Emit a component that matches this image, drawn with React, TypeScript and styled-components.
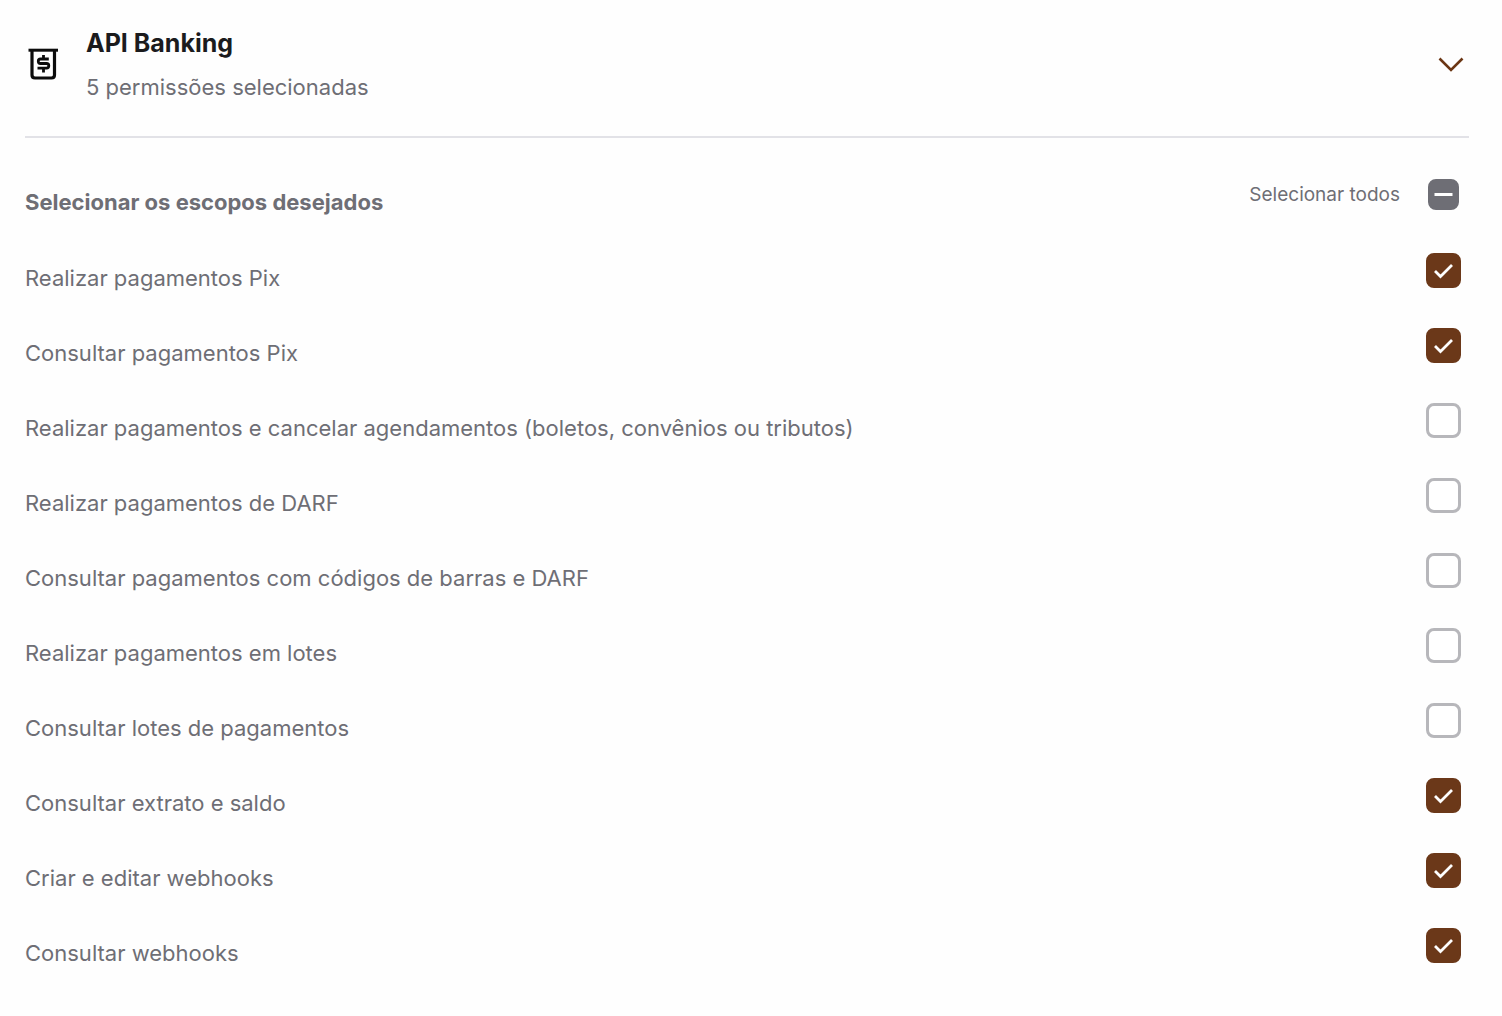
import React, { useEffect, useRef, useState } from 'react';
import styled, { createGlobalStyle } from 'styled-components';

const GlobalStyle = createGlobalStyle`
  * { box-sizing: border-box; }
  body {
    margin: 0;
    background: #fefefe;
    color: #6e6e75;
    font-family: Inter, "Liberation Sans", sans-serif;
    font-size: 22px;
  }
`;

const Panel = styled.section`
  padding: 25px 33px 25px 25px;
`;

const Header = styled.header`
  display: flex;
  align-items: center;
  gap: 25px;
  padding-bottom: 33px;
  border-bottom: 2px solid #e2e2e7;
`;

const ProductIcon = styled.svg`
  flex: none;
  width: 36px;
  height: 36px;
`;

const Heading = styled.div`
  flex: 1;
`;

const Title = styled.h2`
  margin: 0 0 10px;
  color: #1b1b1d;
  font-size: 25px;
  font-weight: 700;
  line-height: 36px;
`;

const Summary = styled.p`
  margin: 0;
  line-height: 32px;
`;

const Toggle = styled.button`
  display: grid;
  place-items: center;
  width: 36px;
  height: 36px;
  padding: 0;
  border: 0;
  background: none;
  color: #6b3614;
  cursor: pointer;
`;

const Scopes = styled.fieldset`
  min-width: 0;
  margin: 0;
  padding: 39px 8px 0 0;
  border: 0;
`;

const Row = styled.div`
  display: flex;
  align-items: flex-start;
  justify-content: space-between;
  min-height: 75px;
`;

const ScopeList = styled.div`
  padding-top: 1px;
`;

const ScopeLabel = styled.label`
  flex: 1;
  padding-top: 7px;
  line-height: 36px;
`;

const ScopesTitle = styled.h3`
  flex: 1;
  margin: 0;
  padding-top: 7px;
  font-size: 22px;
  font-weight: 700;
  line-height: 36px;
`;

const AllLabel = styled.label`
  margin-right: 26px;
  font-size: 19px;
  line-height: 35px;
`;

const CheckSlot = styled.span`
  display: grid;
  place-items: center;
  width: 35px;
  height: 35px;

  > * { grid-area: 1 / 1; }
`;

const CheckInput = styled.input`
  appearance: none;
  width: 35px;
  height: 35px;
  margin: 0;
  border: 3px solid #b7b7bb;
  border-radius: 8px;
  background: #ffffff;
  cursor: pointer;

  &:checked {
    border-color: #6b3819;
    background: #6b3819;
  }

  &:indeterminate {
    width: 31px;
    height: 31px;
    border-color: #6e6e75;
    background: #6e6e75;
  }
`;

const Mark = styled.svg`
  width: 35px;
  height: 35px;
  fill: none;
  stroke: #fefefe;
  pointer-events: none;
`;

type CheckboxProps = {
  id: string;
  checked: boolean;
  mixed?: boolean;
  onChange: () => void;
};

function Checkbox({ id, checked, mixed = false, onChange }: CheckboxProps) {
  const ref = useRef<HTMLInputElement>(null);

  useEffect(() => {
    if (ref.current) ref.current.indeterminate = mixed;
  }, [mixed, checked]);

  return (
    <CheckSlot>
      <CheckInput ref={ref} id={id} type="checkbox" checked={checked} onChange={onChange} />
      {mixed && (
        <Mark viewBox="0 0 35 35" aria-hidden="true">
          <path d="M8.500 17.500H26.500" strokeWidth="3" />
        </Mark>
      )}
      {checked && !mixed && (
        <Mark viewBox="0 0 35 35" aria-hidden="true">
          <path d="M9 18L14.500 23.500L26 12" strokeWidth="2.800" />
        </Mark>
      )}
    </CheckSlot>
  );
}

const SCOPES = [
  { id: 'pix-write', label: 'Realizar pagamentos Pix', on: true },
  { id: 'pix-read', label: 'Consultar pagamentos Pix', on: true },
  { id: 'payment-write', label: 'Realizar pagamentos e cancelar agendamentos (boletos, convênios ou tributos)', on: false },
  { id: 'darf-write', label: 'Realizar pagamentos de DARF', on: false },
  { id: 'payment-read', label: 'Consultar pagamentos com códigos de barras e DARF', on: false },
  { id: 'batch-write', label: 'Realizar pagamentos em lotes', on: false },
  { id: 'batch-read', label: 'Consultar lotes de pagamentos', on: false },
  { id: 'statement-read', label: 'Consultar extrato e saldo', on: true },
  { id: 'webhook-write', label: 'Criar e editar webhooks', on: true },
  { id: 'webhook-read', label: 'Consultar webhooks', on: true },
];

export default function App() {
  const [open, setOpen] = useState(true);
  const [selected, setSelected] = useState(SCOPES.filter((s) => s.on).map((s) => s.id));
  const all = selected.length === SCOPES.length;

  const toggle = (id: string) =>
    setSelected((cur) => (cur.includes(id) ? cur.filter((x) => x !== id) : [...cur, id]));

  return (
    <>
      <GlobalStyle />
      <Panel>
        <Header>
          <ProductIcon viewBox="0 0 36 36" fill="none" stroke="#0c0c0c" strokeWidth="3" aria-hidden="true">
            <path d="M3.500 4.200H33" />
            <path d="M7 4.200V29Q7 32 10 32H26.500Q29.500 32 29.500 29V4.200" strokeWidth="3.200" />
            <path d="M23.800 13H15.500Q13.300 13 13.300 15.200T15.500 17.500H21.500Q23.800 17.500 23.800 19.800T21.500 22.200H12.500M18.500 9V13M18.500 22.200V26.500" strokeWidth="2.800" />
          </ProductIcon>
          <Heading>
            <Title>API Banking</Title>
            <Summary>{`${selected.length} permissões selecionadas`}</Summary>
          </Heading>
          <Toggle
            type="button"
            aria-label="API Banking"
            aria-expanded={open}
            onClick={() => setOpen(!open)}
          >
            <svg width="36" height="36" viewBox="0 0 36 36" fill="none" stroke="currentColor" strokeWidth="2.600" aria-hidden="true">
              <path d="M6.500 12.500L18 24L29.500 12.500" />
            </svg>
          </Toggle>
        </Header>
        {open && (
          <Scopes>
            <Row>
              <ScopesTitle>Selecionar os escopos desejados</ScopesTitle>
              <AllLabel htmlFor="all">Selecionar todos</AllLabel>
              <Checkbox
                id="all"
                checked={all}
                mixed={selected.length > 0 && !all}
                onChange={() => setSelected(all ? [] : SCOPES.map((s) => s.id))}
              />
            </Row>
            <ScopeList>
              {SCOPES.map((s) => (
                <Row key={s.id}>
                  <ScopeLabel htmlFor={s.id}>{s.label}</ScopeLabel>
                  <Checkbox id={s.id} checked={selected.includes(s.id)} onChange={() => toggle(s.id)} />
                </Row>
              ))}
            </ScopeList>
          </Scopes>
        )}
      </Panel>
    </>
  );
}
